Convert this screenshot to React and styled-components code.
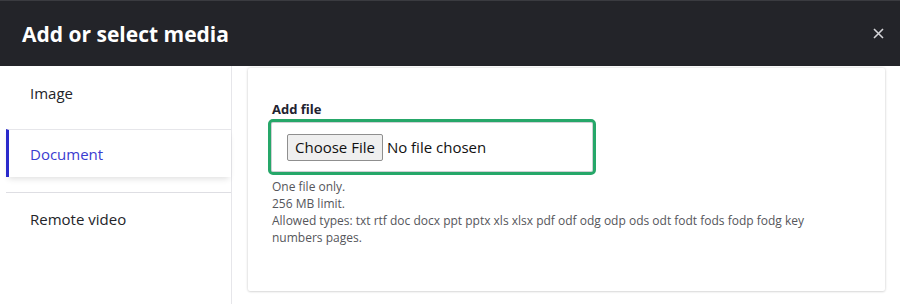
import React from 'react'
import styled, { createGlobalStyle } from 'styled-components'

const Global = createGlobalStyle`
  html, body {
    margin: 0;
    padding: 0;
    background: #fff;
    font-family: "Open Sans", "Noto Sans", sans-serif;
    color: #222330;
  }
`

const Dialog = styled.div`
  width: 900px;
  height: 304px;
  display: flex;
  flex-direction: column;
  overflow: hidden;
`

const TitleBar = styled.header`
  height: 66px;
  background: #232429;
  border-top: 1px solid #3a3b40;
  box-sizing: border-box;
  display: flex;
  align-items: center;
  justify-content: space-between;
  padding: 0 10px 0 22px;
`

const Title = styled.h1`
  margin: 0;
  font-size: 21px;
  font-weight: 700;
  color: #fff;
`

const Close = styled.button`
  width: 24px;
  height: 24px;
  border: 0;
  padding: 0;
  background: none;
  display: flex;
  align-items: center;
  justify-content: center;
  cursor: pointer;
`

const Body = styled.div`
  flex: 1;
  display: flex;
  min-height: 0;
`

const Sidebar = styled.nav`
  width: 232px;
  flex: none;
  border-right: 1px solid #e6e6ea;
  box-sizing: border-box;
  padding-left: 6px;
  display: flex;
  flex-direction: column;
`

const Tab = styled.div`
  height: 48px;
  display: flex;
  align-items: center;
  padding-left: 21px;
  font-size: 15px;
  color: ${(p) => (p.active ? '#3b3bd0' : '#232429')};
  border-left: 3px solid ${(p) => (p.active ? '#2a2acb' : 'transparent')};
  border-top: 1px solid ${(p) => (p.active ? '#e6e6ea' : 'transparent')};
  box-shadow: ${(p) => (p.active ? '0 4px 6px -2px rgba(0,0,0,0.12)' : 'none')};
  margin-top: ${(p) => p.$mt || 0}px;
  margin-bottom: ${(p) => p.$mb || 0}px;
  box-sizing: border-box;
`

const Divider = styled.div`
  height: 1px;
  background: #dedee3;
`

const Main = styled.main`
  flex: 1;
  padding: 2px 15px 0 16px;
`

const Card = styled.section`
  height: 223px;
  box-sizing: border-box;
  background: #fff;
  border-radius: 2px;
  box-shadow: 0 0 3px rgba(0, 0, 0, 0.18), 0 1px 2px rgba(0, 0, 0, 0.08);
  padding: 32px 24px 0 24px;
`

const Label = styled.div`
  font-size: 13px;
  font-weight: 700;
  color: #222330;
  margin-bottom: 1px;
`

const FileBox = styled.div`
  width: 328px;
  height: 56px;
  box-sizing: border-box;
  border: 3px solid #26a769;
  border-radius: 5px;
  box-shadow: inset 0 0 0 1px #d0d0d4;
  display: flex;
  align-items: center;
  padding: 0 0 0 16px;
  margin-left: -4px;
`

const FileButton = styled.span`
  display: inline-flex;
  align-items: center;
  height: 27px;
  padding: 0 7px;
  box-sizing: border-box;
  background: #efefef;
  border: 1px solid #8f8f8f;
  border-radius: 2px;
  font-size: 15px;
  color: #111;
`

const FileText = styled.span`
  font-size: 15px;
  color: #111;
  margin-left: 4px;
  margin-top: -1px;
`

const Help = styled.div`
  margin-top: 3px;
  max-width: 550px;
  font-size: 12px;
  line-height: 17px;
  color: #55565b;
`

export default function App() {
  return (
    <>
      <Global />
      <Dialog>
        <TitleBar>
          <Title>Add or select media</Title>
          <Close aria-label="Close">
            <svg width="11" height="11" viewBox="0 0 11 11">
              <path d="M1 1L10 10M10 1L1 10" stroke="#d4d4d8" strokeWidth="1.6" />
            </svg>
          </Close>
        </TitleBar>
        <Body>
          <Sidebar>
            <Tab $mt={2} $mb={13}>Image</Tab>
            <Tab active $mb={15}>Document</Tab>
            <Divider />
            <Tab $mt={1}>Remote video</Tab>
          </Sidebar>
          <Main>
            <Card>
              <Label>Add file</Label>
              <FileBox>
                <FileButton>Choose File</FileButton>
                <FileText>No file chosen</FileText>
              </FileBox>
              <Help>
                One file only.<br />
                256 MB limit.<br />
                Allowed types: txt rtf doc docx ppt pptx xls xlsx pdf odf odg odp ods odt fodt fods fodp fodg key numbers pages.
              </Help>
            </Card>
          </Main>
        </Body>
      </Dialog>
    </>
  )
}
